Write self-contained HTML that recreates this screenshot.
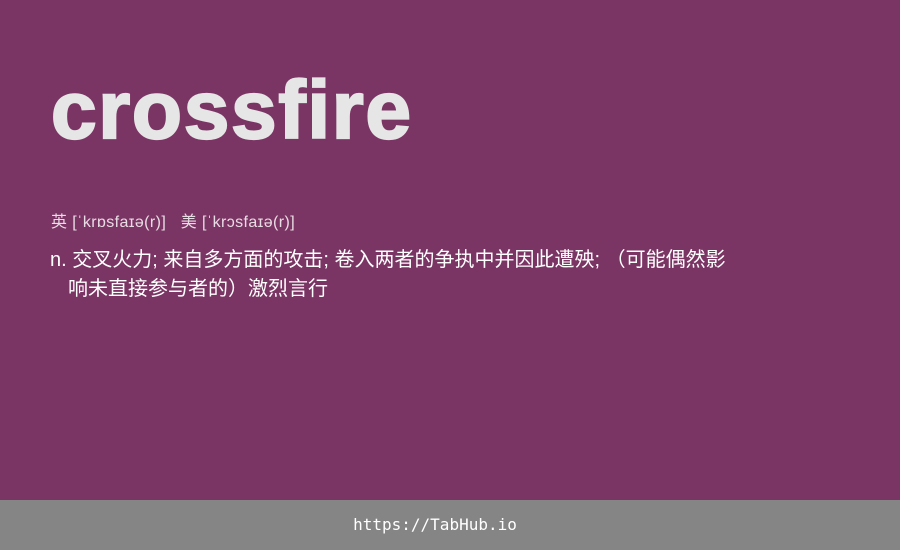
<!DOCTYPE html>
<html><head><meta charset="utf-8"><style>
html,body{margin:0;padding:0}
body{width:900px;height:550px;background:#7b3564;position:relative;overflow:hidden;font-family:"Liberation Sans","Noto Sans CJK SC",sans-serif}
.t{position:absolute;left:51px;top:61px;font-size:82px;font-weight:bold;color:#e6e6e6;letter-spacing:1.7px;line-height:100px;-webkit-text-stroke:2.2px #e6e6e6}
.p{position:absolute;left:51px;top:213px;font-size:16px;color:#e8dde4;line-height:20px;white-space:pre;letter-spacing:0.4px}
.d{position:absolute;left:50px;top:246px;width:760px;font-size:20px;color:#fff;line-height:29px}
.d2{padding-left:18px}
.f{position:absolute;left:0;top:500px;width:870px;height:50px;background:#858585;color:#fff;font-family:"DejaVu Sans Mono","Liberation Mono",monospace;font-size:16px;text-align:center;line-height:50px;padding-right:30px}
</style></head><body>
<div class="t">crossfire</div>
<div class="p">英 [ˈkrɒsfaɪə(r)]   美 [ˈkrɔsfaɪə(r)]</div>
<div class="d">n. 交叉火力; 来自多方面的攻击; 卷入两者的争执中并因此遭殃; （可能偶然影<br><span class="d2">响未直接参与者的）激烈言行</span></div>
<div class="f">https://TabHub.io</div>
</body></html>
